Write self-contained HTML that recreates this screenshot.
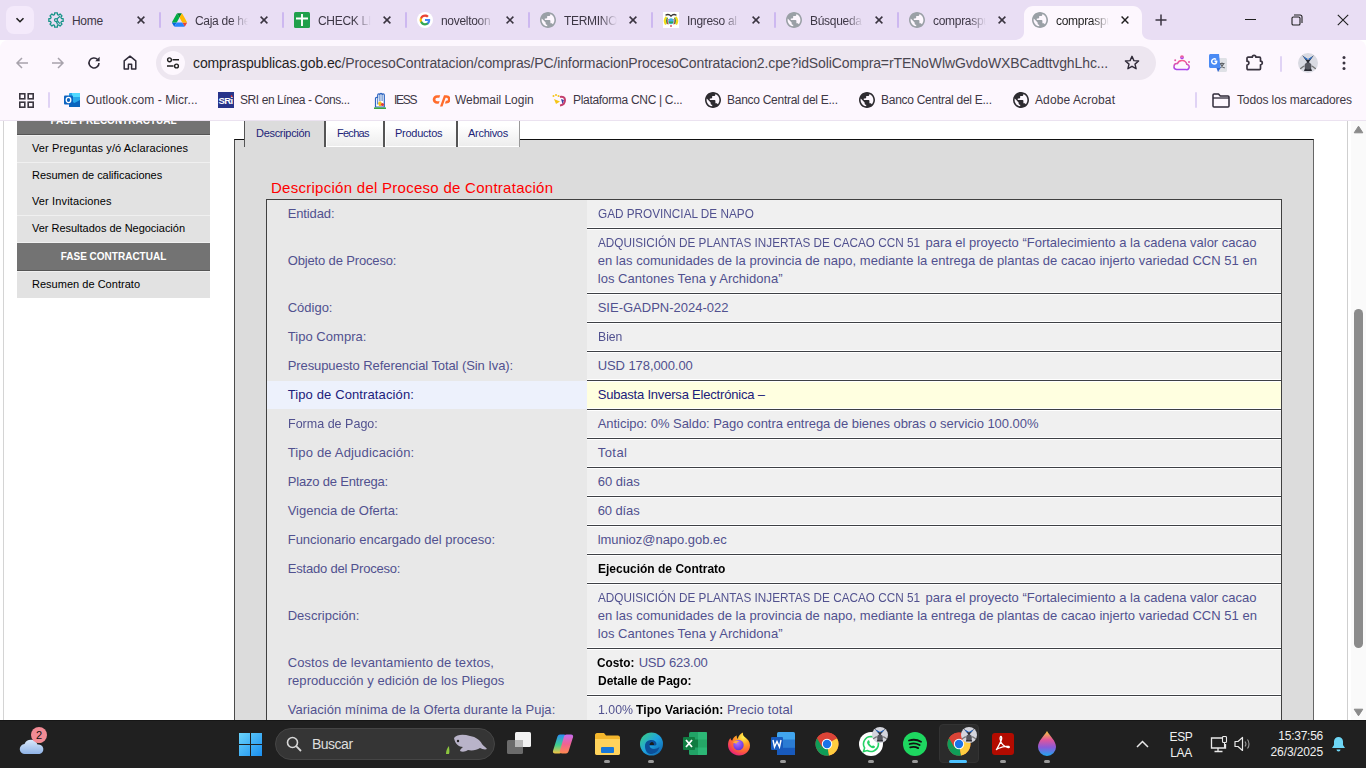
<!DOCTYPE html>
<html><head><meta charset="utf-8">
<style>
*{margin:0;padding:0;box-sizing:border-box}
html,body{width:1366px;height:768px;overflow:hidden;background:#fff;font-family:"Liberation Sans",sans-serif}
.abs{position:absolute}
#tabstrip{position:absolute;left:0;top:0;width:1366px;height:40px;background:#e9def4}
#toolbar{position:absolute;left:0;top:40px;width:1366px;height:80px;background:#fdf7fe;border-radius:8px 8px 0 0}
#page{position:absolute;left:0;top:120px;width:1366px;height:600px;background:#fff;overflow:hidden}
#taskbar{position:absolute;left:0;top:720px;width:1366px;height:48px;background:#202020}
.tt{position:absolute;top:14px;font-size:12px;line-height:14px;color:#3d3745;white-space:nowrap;overflow:hidden;letter-spacing:-0.3px;-webkit-mask-image:linear-gradient(90deg,#000 68%,transparent 100%)}
.sep{position:absolute;top:12px;width:2px;height:16px;background:#cdb8f0;border-radius:1px}
.bm{position:absolute;font-size:12px;line-height:14px;color:#3d3745;white-space:nowrap}
.sbh,.sbd,.sbl,.sbi{left:17px;width:193px}
.sbh{background:#737373;color:#fff;font-weight:bold;font-size:10px;text-align:center}
.sbh span{position:absolute;left:0;right:0;top:7px;line-height:14px}
.sbd{height:1px;background:#555}
.sbl{height:1px;background:#f0f0f0}
.sbi{background:#e2e2e2;font-size:11px;color:#000}
.sbi span{position:absolute;left:15px;top:5px;line-height:14px;white-space:nowrap}
.tabi{top:-6px;height:33px;border-left:2px solid #555;background:linear-gradient(#fff 35%,#ececec);box-shadow:inset 1px -1px 0 #fff}
.tabt{top:6px;font-size:11px;line-height:14px;color:#221f78;white-space:nowrap}
.rs{left:587px;width:694px;height:3px;background:#3e4045;border-top:1px solid #fff;border-bottom:1px solid #fff}
.cv,.cl{font-size:13px;line-height:18px;color:#51518f;white-space:nowrap}
.cv{left:598px}.cl{left:288px}
.cv b{color:#000}
.hl{color:#20207a}
.dot{top:40px;width:6px;height:3px;border-radius:2px;background:#9a9a9a}
.av{width:16px;height:16px;border-radius:8px;background:radial-gradient(circle at 50% 60%,#4a4a50 0,#3a3a40 30%,#9a9ca6 55%,#e6e6ec 85%)}

</style></head>
<body>
<div id="tabstrip">
 <div class="abs" style="left:6px;top:6px;width:28px;height:28px;border-radius:8px;background:#f4eafb"></div>
 <svg class="abs" style="left:14px;top:14px" width="12" height="12" viewBox="0 0 12 12"><path d="M2.5 4.2 6 7.7 9.5 4.2" fill="none" stroke="#1f1f1f" stroke-width="1.6"/></svg>
 <!-- tab 1 Home -->
 <svg class="abs" style="left:48px;top:12px" width="16" height="16" viewBox="0 0 16 16"><g fill="none" stroke="#179488" stroke-width="1.25" stroke-linejoin="round"><path d="M6.55 2.59 L6.61 0.83 L9.39 0.83 L9.45 2.59 L10.80 3.15 L12.08 1.95 L14.05 3.92 L12.85 5.20 L13.41 6.55 L15.17 6.61 L15.17 9.39 L13.41 9.45 L12.85 10.80 L14.05 12.08 L12.08 14.05 L10.80 12.85 L9.45 13.41 L9.39 15.17 L6.61 15.17 L6.55 13.41 L5.20 12.85 L3.92 14.05 L1.95 12.08 L3.15 10.80 L2.59 9.45 L0.83 9.39 L0.83 6.61 L2.59 6.55 L3.15 5.20 L1.95 3.92 L3.92 1.95 L5.20 3.15Z"/><circle cx="8" cy="8" r="1.5"/><path d="M9.1 6.9 12 4.2M8.4 9.5 9.6 12.6M9.5 9 11.8 11.6"/></g></svg>
 <div class="tt" style="left:72px;width:52px;-webkit-mask-image:none">Home</div>
 <svg class="abs xx" style="left:137px;top:16px" width="8" height="8" viewBox="0 0 8 8"><path d="M.6.6l6.8 6.8M7.4.6.6 7.4" stroke="#3a3440" stroke-width="1.5"/></svg>
 <div class="sep" style="left:159px"></div>
 <!-- tab 2 Drive -->
 <svg class="abs" style="left:172px;top:13px" width="15" height="14" viewBox="0 0 87.3 78"><path d="m6.6 66.85 3.85 6.65c.8 1.4 1.95 2.5 3.3 3.3l13.75-23.8h-27.5c0 1.55.4 3.1 1.2 4.5z" fill="#0066da"/><path d="m43.65 25-13.75-23.8c-1.35.8-2.5 1.9-3.3 3.3l-25.4 44a9.06 9.06 0 0 0 -1.2 4.5h27.5z" fill="#00ac47"/><path d="m73.55 76.8c1.35-.8 2.5-1.9 3.3-3.3l1.6-2.75 7.650-13.25c.8-1.4 1.2-2.95 1.2-4.5h-27.502l5.852 11.5z" fill="#ea4335"/><path d="m43.65 25 13.75-23.8c-1.35-.8-2.9-1.2-4.5-1.2h-18.5c-1.6 0-3.150.45-4.5 1.2z" fill="#00832d"/><path d="m59.8 53h-32.3l-13.75 23.8c1.35.8 2.9 1.2 4.5 1.2h50.8c1.6 0 3.15-.45 4.5-1.2z" fill="#2684fc"/><path d="m73.4 26.5-12.7-22c-.8-1.4-1.95-2.5-3.3-3.3l-13.75 23.8 16.15 28h27.45c0-1.55-.4-3.1-1.2-4.5z" fill="#ffba00"/></svg>
 <div class="tt" style="left:195px;width:53px">Caja de herramientas</div>
 <svg class="abs" style="left:260px;top:16px" width="8" height="8" viewBox="0 0 8 8"><path d="M.6.6l6.8 6.8M7.4.6.6 7.4" stroke="#3a3440" stroke-width="1.5"/></svg>
 <div class="sep" style="left:282px"></div>
 <!-- tab 3 sheet -->
 <svg class="abs" style="left:294px;top:12px" width="16" height="16" viewBox="0 0 16 16"><rect width="16" height="16" rx="1.5" fill="#20a04b"/><path d="M2 6.5h12M8 2v12" stroke="#fff" stroke-width="1.9"/></svg>
 <div class="tt" style="left:318px;width:53px">CHECK LIST</div>
 <svg class="abs" style="left:383px;top:16px" width="8" height="8" viewBox="0 0 8 8"><path d="M.6.6l6.8 6.8M7.4.6.6 7.4" stroke="#3a3440" stroke-width="1.5"/></svg>
 <div class="sep" style="left:405px"></div>
 <!-- tab 4 google -->
 <svg class="abs" style="left:417px;top:12px" width="16" height="16" viewBox="0 0 16 16"><circle cx="8" cy="8" r="8" fill="#fff"/><path d="M13.2 8.1c0-.4 0-.8-.1-1.2H8v2.2h2.9c-.1.7-.5 1.3-1.1 1.7v1.4h1.8c1-.9 1.6-2.3 1.6-4.1z" fill="#4285f4"/><path d="M8 13.4c1.5 0 2.7-.5 3.6-1.3l-1.8-1.4c-.5.3-1.1.5-1.8.5-1.4 0-2.6-1-3-2.2H3.2v1.4c.9 1.8 2.7 3 4.8 3z" fill="#34a853"/><path d="M5 9c-.1-.3-.2-.7-.2-1s.1-.7.2-1V5.6H3.2C2.8 6.3 2.6 7.1 2.6 8s.2 1.7.6 2.4z" fill="#fbbc05"/><path d="M8 4.8c.8 0 1.5.3 2.1.8l1.6-1.6C10.7 3.1 9.5 2.6 8 2.6c-2.1 0-3.9 1.2-4.8 3L5 7c.4-1.3 1.6-2.2 3-2.2z" fill="#ea4335"/></svg>
 <div class="tt" style="left:441px;width:53px">noveltoon</div>
 <svg class="abs" style="left:506px;top:16px" width="8" height="8" viewBox="0 0 8 8"><path d="M.6.6l6.8 6.8M7.4.6.6 7.4" stroke="#3a3440" stroke-width="1.5"/></svg>
 <div class="sep" style="left:528px"></div>
 <!-- tab 5 globe -->
 <svg class="abs" style="left:540px;top:12px" width="16" height="16" viewBox="0 0 16 16"><use href="#globeg"/></svg>
 <div class="tt" style="left:564px;width:53px">TERMINOS</div>
 <svg class="abs" style="left:629px;top:16px" width="8" height="8" viewBox="0 0 8 8"><path d="M.6.6l6.8 6.8M7.4.6.6 7.4" stroke="#3a3440" stroke-width="1.5"/></svg>
 <div class="sep" style="left:651px"></div>
 <!-- tab 6 ecuador -->
 <svg class="abs" style="left:663px;top:12px" width="16" height="16" viewBox="0 0 16 16"><rect width="16" height="16" fill="#fff"/><path d="M3 12.5C1.5 10 1.5 7 3.5 5M13 12.5c1.5-2.5 1.5-5.5-.5-7.5" fill="none" stroke="#f5dc1a" stroke-width="2.2"/><path d="M4.5 12C3.4 10 3.4 7.5 4.6 5.8M11.5 12c1.1-2 1.1-4.5-.1-6.2" fill="none" stroke="#2c8a3a" stroke-width="1.1"/><path d="M5.2 12.3C4.5 10.5 4.5 8.5 5.2 7M10.8 12.3c.7-1.8.7-3.8 0-5.3" fill="none" stroke="#c8283a" stroke-width="1"/><ellipse cx="8" cy="9.3" rx="2.6" ry="3" fill="#3fb2e6"/><path d="M5.6 9.6h4.8l-.5 1.6H6.1z" fill="#2fa650"/><path d="M2.5 3.2C5 1.8 6.8 2.6 8 4.2 9.2 2.6 11 1.8 13.5 3.2" fill="none" stroke="#3a3433" stroke-width="1.3"/><path d="M8 13.2v1.6" stroke="#d03040" stroke-width="1.6"/></svg>
 <div class="tt" style="left:687px;width:53px">Ingreso al sistema</div>
 <svg class="abs" style="left:752px;top:16px" width="8" height="8" viewBox="0 0 8 8"><path d="M.6.6l6.8 6.8M7.4.6.6 7.4" stroke="#3a3440" stroke-width="1.5"/></svg>
 <div class="sep" style="left:774px"></div>
 <!-- tab 7 -->
 <svg class="abs" style="left:786px;top:12px" width="16" height="16" viewBox="0 0 16 16"><use href="#globeg"/></svg>
 <div class="tt" style="left:810px;width:53px">Búsqueda de Procesos</div>
 <svg class="abs" style="left:875px;top:16px" width="8" height="8" viewBox="0 0 8 8"><path d="M.6.6l6.8 6.8M7.4.6.6 7.4" stroke="#3a3440" stroke-width="1.5"/></svg>
 <div class="sep" style="left:897px"></div>
 <!-- tab 8 -->
 <svg class="abs" style="left:909px;top:12px" width="16" height="16" viewBox="0 0 16 16"><use href="#globeg"/></svg>
 <div class="tt" style="left:933px;width:53px">compraspublicas</div>
 <svg class="abs" style="left:998px;top:16px" width="8" height="8" viewBox="0 0 8 8"><path d="M.6.6l6.8 6.8M7.4.6.6 7.4" stroke="#3a3440" stroke-width="1.5"/></svg>
 <!-- active tab -->
 <svg class="abs" style="left:1014px;top:6px" width="138" height="34" viewBox="0 0 138 34"><path d="M0 34c6 0 10-3 10-8V9c0-5 4-9 9-9h100c5 0 9 4 9 9v17c0 5 4 8 10 8z" fill="#fdf7fe"/></svg>
 <svg class="abs" style="left:1032px;top:12px" width="16" height="16" viewBox="0 0 16 16"><use href="#globeg"/></svg>
 <div class="tt" style="left:1056px;width:53px;color:#1f1f1f">compraspublicas</div>
 <svg class="abs" style="left:1121px;top:16px" width="8" height="8" viewBox="0 0 8 8"><path d="M.6.6l6.8 6.8M7.4.6.6 7.4" stroke="#1f1f1f" stroke-width="1.4"/></svg>
 <!-- new tab -->
 <svg class="abs" style="left:1155px;top:14px" width="12" height="12" viewBox="0 0 12 12"><path d="M6 .5v11M.5 6h11" stroke="#3a3440" stroke-width="1.5"/></svg>
 <!-- window controls -->
 <div class="abs" style="left:1245px;top:19px;width:11px;height:1px;background:#1f1f1f"></div>
 <svg class="abs" style="left:1291px;top:14px" width="12" height="12" viewBox="0 0 12 12"><rect x="1" y="3" width="8" height="8" rx="1.3" fill="none" stroke="#1f1f1f" stroke-width="1.1"/><path d="M3 1h6.2A1.8 1.8 0 0 1 11 2.8V9" fill="none" stroke="#1f1f1f" stroke-width="1.1"/></svg>
 <svg class="abs" style="left:1337px;top:14px" width="12" height="12" viewBox="0 0 12 12"><path d="M.8.8l10.4 10.4M11.2.8.8 11.2" stroke="#1f1f1f" stroke-width="1.1"/></svg>
</div>

<svg width="0" height="0" style="position:absolute"><defs>
 <g id="globeg" transform="translate(-1.6 -1.6) scale(.8)"><circle cx="12" cy="12" r="9" fill="#fdf7fe"/><path d="M12 2C6.48 2 2 6.48 2 12s4.48 10 10 10 10-4.48 10-10S17.52 2 12 2zm-1 17.93c-3.950-.49-7-3.85-7-7.93 0-.62.08-1.21.21-1.79L9 15v1c0 1.1.9 2 2 2v1.93zm6.9-2.54c-.26-.81-1-1.39-1.9-1.39h-1v-3c0-.55-.45-1-1-1H8v-2h2c.55 0 1-.45 1-1V7h2c1.1 0 2-.9 2-2v-.41c2.93 1.19 5 4.06 5 7.41 0 2.08-.8 3.97-2.1 5.39z" fill="#9aa0a6"/></g>
 <g id="globed" transform="translate(-1.6 -1.6) scale(.8)"><circle cx="12" cy="12" r="9" fill="#fdf7fe"/><path d="M12 2C6.48 2 2 6.48 2 12s4.48 10 10 10 10-4.48 10-10S17.52 2 12 2zm-1 17.93c-3.950-.49-7-3.85-7-7.93 0-.62.08-1.21.21-1.79L9 15v1c0 1.1.9 2 2 2v1.93zm6.9-2.54c-.26-.81-1-1.39-1.9-1.39h-1v-3c0-.55-.45-1-1-1H8v-2h2c.55 0 1-.45 1-1V7h2c1.1 0 2-.9 2-2v-.41c2.93 1.19 5 4.06 5 7.41 0 2.08-.8 3.97-2.1 5.39z" fill="#2d2b30"/></g>
</defs></svg>
<div id="toolbar">
 <!-- back -->
 <svg class="abs" style="left:15px;top:16px" width="14" height="14" viewBox="0 0 14 14"><path d="M13 7H2M7 2 2 7l5 5" fill="none" stroke="#a8a3ac" stroke-width="1.5"/></svg>
 <svg class="abs" style="left:51px;top:16px" width="14" height="14" viewBox="0 0 14 14"><path d="M1 7h11M7 2l5 5-5 5" fill="none" stroke="#a8a3ac" stroke-width="1.5"/></svg>
 <svg class="abs" style="left:87px;top:16px" width="14" height="14" viewBox="0 0 14 14"><path d="M12 7A5 5 0 1 1 10.6 3.5" fill="none" stroke="#2f2a38" stroke-width="1.6"/><path d="M12.6 .8v4.4H8.2z" fill="#2f2a38"/></svg>
 <svg class="abs" style="left:123px;top:15px" width="14" height="15" viewBox="0 0 14 15"><path d="M1.2 14V5.8L7 1.2l5.8 4.6V14H8.6V9.2H5.4V14z" fill="none" stroke="#2f2a38" stroke-width="1.5" stroke-linejoin="round"/></svg>
 <!-- omnibox -->
 <div class="abs" style="left:156px;top:6px;width:1000px;height:34px;border-radius:17px;background:#ede6f0"></div>
 <div class="abs" style="left:161px;top:11px;width:24px;height:24px;border-radius:12px;background:#fdf7fe"></div>
 <svg class="abs" style="left:166px;top:16px" width="14" height="14" viewBox="0 0 14 14"><g fill="none" stroke="#1f1f1f" stroke-width="1.4"><circle cx="3.5" cy="3.8" r="1.9"/><path d="M6.5 3.8H13M1 10h6.5"/><circle cx="10.5" cy="10" r="1.9"/></g></svg>
 <div class="abs" style="left:193px;top:15px;font-size:14px;letter-spacing:-0.115px;white-space:nowrap;color:#4a4650"><span style="color:#1f1f1f">compraspublicas.gob.ec</span>/ProcesoContratacion/compras/PC/informacionProcesoContratacion2.cpe?idSoliCompra=rTENoWlwGvdoWXBCadttvghLhc...</div>
 <svg class="abs" style="left:1124px;top:15px" width="16" height="16" viewBox="0 0 16 16"><path d="M8 1.3l1.9 4.3 4.7.4-3.6 3.1 1.1 4.6L8 11.3l-4.1 2.4 1.1-4.6L1.4 6l4.7-.4z" fill="none" stroke="#2f2a38" stroke-width="1.4" stroke-linejoin="round"/></svg>
 <!-- right icons -->
 <svg class="abs" style="left:1172px;top:13px" width="19" height="19" viewBox="0 0 19 19"><defs><linearGradient id="wg" x1="0" y1="0" x2="0" y2="1"><stop offset="0" stop-color="#f65a8e"/><stop offset="1" stop-color="#a644ee"/></linearGradient></defs><g fill="none" stroke="url(#wg)" stroke-width="1.5"><path d="M4.6 16.6h9.6a2.7 2.7 0 0 0 .6-5.4 5 5 0 0 0-9.4-.6 2.9 2.9 0 0 0-.8 6z"/><circle cx="10" cy="4.3" r="1.2"/></g><circle cx="3.2" cy="7.3" r="1" fill="#e45aa8"/><circle cx="17" cy="9" r="1" fill="#e45aa8"/></svg>
 <svg class="abs" style="left:1209px;top:14px" width="18" height="18" viewBox="0 0 18 18"><path d="M8 4h8.5c.8 0 1.5.7 1.5 1.5v11c0 .8-.7 1.5-1.5 1.5H9z" fill="#dfe1e6"/><path d="M10.5 9.5h5M13 8.5v1M11.3 9.5c.6 2 2.2 3.6 4.4 4.6M14.7 9.5c-.6 2-2.2 3.6-4.4 4.6" stroke="#5f6368" stroke-width="1.1" fill="none"/><path d="M0 1.5C0 .7.7 0 1.5 0H10l1.5 14H1.5C.7 14 0 13.3 0 12.5z" fill="#4a8af4"/><path d="M8.3 6.5H5.5v1.5h1.3c-.2.7-.8 1.2-1.6 1.2a1.8 1.8 0 0 1 0-3.6c.5 0 .9.2 1.2.5l1.1-1.1A3.3 3.3 0 1 0 5.2 10.7c1.9 0 3.2-1.3 3.2-3.3 0-.3 0-.6-.1-.9z" fill="#fff"/><path d="M9 18l-1.5-4h4z" fill="#3168d1"/></svg>
 <svg class="abs" style="left:1245px;top:12px" width="20" height="20" viewBox="0 0 20 20"><path d="M3 5.2h4.3a1.8 1.8 0 0 1 3.6 0h3.6a1 1 0 0 1 1 1v3a1.8 1.8 0 0 1 0 3.6v3.8a1 1 0 0 1-1 1H3a1 1 0 0 1-1-1v-3.6a1.8 1.8 0 0 0 0-3.8V6.2a1 1 0 0 1 1-1z" fill="none" stroke="#3a3440" stroke-width="1.7" stroke-linejoin="round"/></svg>
 <div class="abs" style="left:1280px;top:16px;width:2px;height:16px;background:#e0d3f5;border-radius:1px"></div>
 <svg class="abs" style="left:1298px;top:13px" width="20" height="20" viewBox="0 0 20 20"><defs><clipPath id="avc"><circle cx="10" cy="10" r="10"/></clipPath></defs><g clip-path="url(#avc)"><rect width="20" height="20" fill="#d9dae2"/><path d="M4 2l5 7-3 9h8l-3-9 5-7-6 5z" fill="#2a2b33"/><path d="M5 3l3 4 2-1M15 3l-3 4-2-1" fill="#2d6fc8"/><circle cx="10" cy="13" r="3.5" fill="#55565e"/><path d="M2 16l4-3M18 16l-4-3" stroke="#777" stroke-width="1.5"/></g></svg>
 <svg class="abs" style="left:1337px;top:15px" width="14" height="16" viewBox="0 0 14 16"><circle cx="7" cy="2.5" r="1.5" fill="#3a3440"/><circle cx="7" cy="8" r="1.5" fill="#3a3440"/><circle cx="7" cy="13.5" r="1.5" fill="#3a3440"/></svg>
 <!-- bookmarks -->
 <svg class="abs" style="left:19px;top:53px" width="15" height="15" viewBox="0 0 15 15"><g fill="none" stroke="#3b3640" stroke-width="1.6"><rect x=".8" y=".8" width="5" height="5"/><rect x="9.2" y=".8" width="5" height="5"/><rect x=".8" y="9.2" width="5" height="5"/><rect x="9.2" y="9.2" width="5" height="5"/></g></svg>
 <div class="abs" style="left:48px;top:52px;width:2px;height:16px;background:#e0d3f5;border-radius:1px"></div>
 <svg class="abs" style="left:64px;top:52px" width="16" height="16" viewBox="0 0 16 16"><rect x="5" y="1" width="11" height="14" rx="1" fill="#28a8ea"/><path d="M5 8l5.5 3L16 8v7H5z" fill="#0a64bd"/><path d="M8 1h8v4H8z" fill="#50d9ff"/><rect x="0" y="3.5" width="9" height="9" rx="1" fill="#0b63c1"/><ellipse cx="4.5" cy="8" rx="2.3" ry="2.6" fill="none" stroke="#fff" stroke-width="1.3"/></svg>
 <div class="bm" style="left:86px;top:53px;letter-spacing:0.083px">Outlook.com - Micr...</div>
 <svg class="abs" style="left:218px;top:52px" width="16" height="16" viewBox="0 0 16 16"><rect width="16" height="16" fill="#27348b"/><text x=".6" y="11.8" font-family="Liberation Sans" font-weight="bold" font-size="9.5" letter-spacing="-.6" fill="#fff">SRi</text><circle cx="13.6" cy="4.2" r=".9" fill="#e53935"/></svg>
 <div class="bm" style="left:240px;top:53px;letter-spacing:-0.416px">SRI en Línea - Cons...</div>
 <svg class="abs" style="left:372px;top:52px" width="16" height="17" viewBox="0 0 16 17"><path d="M3.5 15V6.5a1.1 1.1 0 0 1 2.2 0V3a1.1 1.1 0 0 1 2.2 0v-.5a1.1 1.1 0 0 1 2.2 0V3a1.1 1.1 0 0 1 2.2 0v12z" fill="#fff" stroke="#2d64c0" stroke-width="1.2"/><path d="M5.7 6.5v6M7.9 3v6M10.1 2.5v6.5" stroke="#2d64c0" stroke-width=".9"/><path d="M6 11l2-2 2 2-1 3H7z" fill="#f2c01e"/><circle cx="10.5" cy="12.5" r="1.6" fill="#e23b3b"/><path d="M2 16.2h12" stroke="#3aa845" stroke-width="1.6"/></svg>
 <div class="bm" style="left:394px;top:53px;letter-spacing:-1.3px">IESS</div>
 <svg class="abs" style="left:432px;top:53px" width="18" height="14" viewBox="0 0 18 14"><path d="M8.2 2.2H5a4.3 4.3 0 0 0 0 8.6h1.6l1.1-2.6H5.1a1.7 1.7 0 0 1 0-3.4h2.2zM8 13.5 12 2.2h2.4a4.100 4.100 0 0 1 0 8.2h-1.500l1-2.600h.6a1.500 1.500 0 0 0 0-3h-.9L10.500 13.500z" fill="#ff6c2c"/></svg>
 <div class="bm" style="left:455px;top:53px;letter-spacing:-0.038px">Webmail Login</div>
 <svg class="abs" style="left:551px;top:52px" width="16" height="16" viewBox="0 0 16 16"><path d="M9 5c2.5-1 5 .5 5 3 0 2.6-2 5-5 5.5" fill="none" stroke="#c43e6c" stroke-width="2"/><path d="M3 7l6 2.5L5 12z" fill="#f5c518"/><path d="M10 7l3 1-1.5 4z" fill="#3b3fa0"/><circle cx="2.5" cy="4" r="1" fill="#f5c518"/><circle cx="5" cy="3" r="1" fill="#f5c518"/><circle cx="7.5" cy="4" r="1" fill="#f5c518"/></svg>
 <div class="bm" style="left:573px;top:53px;letter-spacing:-0.311px">Plataforma CNC | C...</div>
 <svg class="abs" style="left:705px;top:52px" width="16" height="16" viewBox="0 0 16 16"><use href="#globed"/></svg>
 <div class="bm" style="left:727px;top:53px;letter-spacing:-0.273px">Banco Central del E...</div>
 <svg class="abs" style="left:859px;top:52px" width="16" height="16" viewBox="0 0 16 16"><use href="#globed"/></svg>
 <div class="bm" style="left:881px;top:53px;letter-spacing:-0.273px">Banco Central del E...</div>
 <svg class="abs" style="left:1013px;top:52px" width="16" height="16" viewBox="0 0 16 16"><use href="#globed"/></svg>
 <div class="bm" style="left:1035px;top:53px;letter-spacing:0.105px">Adobe Acrobat</div>
 <div class="abs" style="left:1195px;top:52px;width:2px;height:16px;background:#e0d3f5;border-radius:1px"></div>
 <svg class="abs" style="left:1212px;top:53px" width="18" height="15" viewBox="0 0 18 15"><path d="M1 2c0-.6.4-1 1-1h4.5l1.8 2H16c.6 0 1 .4 1 1v9c0 .6-.4 1-1 1H2c-.6 0-1-.4-1-1z" fill="none" stroke="#2f2a38" stroke-width="1.5" stroke-linejoin="round"/><path d="M1 5h16" stroke="#2f2a38" stroke-width="1.3"/></svg>
 <div class="bm" style="left:1237px;top:53px;letter-spacing:-0.126px">Todos los marcadores</div>
</div>

<div id="page">
 <div class="abs" style="left:3px;top:0;width:1px;height:600px;background:#d4d4d4"></div>
 <div class="abs" style="left:1347px;top:0;width:1px;height:600px;background:#cfcfcf"></div>
 <!-- sidebar (page coords: y-120) -->
 <div class="abs sbh" style="top:-13px;height:27px"><span>FASE PRECONTRACTUAL</span></div>
 <div class="abs sbd" style="top:14px"></div><div class="abs sbl" style="top:15px"></div>
 <div class="abs sbi" style="top:16px;height:26px"><span style="letter-spacing:0.108px">Ver Preguntas y/ó Aclaraciones</span></div>
 <div class="abs sbl" style="top:42px"></div>
 <div class="abs sbi" style="top:43px;height:52px"><span style="letter-spacing:-0.027px">Resumen de calificaciones</span><span style="top:31px;letter-spacing:0.13px">Ver Invitaciones</span></div>
 <div class="abs sbl" style="top:95px"></div>
 <div class="abs sbi" style="top:96px;height:26px"><span style="letter-spacing:-0.017px">Ver Resultados de Negociación</span></div>
 <div class="abs sbl" style="top:122px"></div>
 <div class="abs sbh" style="top:123px;height:27px"><span>FASE CONTRACTUAL</span></div>
 <div class="abs sbd" style="top:150px"></div><div class="abs sbl" style="top:151px"></div>
 <div class="abs sbi" style="top:152px;height:26px"><span style="letter-spacing:0.021px">Resumen de Contrato</span></div>

 <!-- main box -->
 <div class="abs" style="left:234px;top:19px;width:1080px;height:700px;background:#dcdcdc;border-left:1px solid #4a4a4a;border-top:1px solid #111;border-right:1px solid #666"></div>
 <!-- tabs -->
 <div class="abs" style="left:244px;top:-6px;width:81px;height:33px;background:#dcdcdc;border-left:1px solid #555"></div>
 <div class="abs tabi" style="left:324px;width:60px"></div>
 <div class="abs tabi" style="left:383px;width:74px"></div>
 <div class="abs tabi" style="left:456px;width:64px;border-right:1px solid #999"></div>
 <div class="abs tabt" style="left:256px;letter-spacing:-0.307px">Descripción</div>
 <div class="abs tabt" style="left:337px;letter-spacing:-0.736px">Fechas</div>
 <div class="abs tabt" style="left:395px;letter-spacing:-0.254px">Productos</div>
 <div class="abs tabt" style="left:468px;letter-spacing:-0.284px">Archivos</div>

 <div class="abs" style="left:271px;top:59px;font-size:15px;color:#ff0000;letter-spacing:0.27px;white-space:nowrap">Descripción del Proceso de Contratación</div>

 <!-- table -->
 <div class="abs" style="left:266px;top:79px;width:1016px;height:600px;background:#e8e8e8;border-left:1px solid #404040;border-top:1px solid #404040;border-right:1px solid #404040"></div>
 <div class="abs" style="left:587px;top:80px;width:694px;height:600px;background:#f0f0f0"></div>
 <div class="abs" style="left:267px;top:261px;width:320px;height:28px;background:#edf1fc"></div>
 <div class="abs" style="left:587px;top:261px;width:694px;height:28px;background:#ffffe0"></div>
  <div class="abs rs" style="top:107px"></div>
 <div class="abs rs" style="top:172px"></div>
 <div class="abs rs" style="top:201px"></div>
 <div class="abs rs" style="top:230px"></div>
 <div class="abs rs" style="top:259px"></div>
 <div class="abs rs" style="top:288px"></div>
 <div class="abs rs" style="top:317px"></div>
 <div class="abs rs" style="top:346px"></div>
 <div class="abs rs" style="top:375px"></div>
 <div class="abs rs" style="top:404px"></div>
 <div class="abs rs" style="top:433px"></div>
 <div class="abs rs" style="top:462px"></div>
 <div class="abs rs" style="top:527px"></div>
 <div class="abs rs" style="top:574px"></div>

  <div class="abs cv " style="left:597.7px;top:85px;transform:scaleX(0.9049);transform-origin:0 0">GAD PROVINCIAL DE NAPO</div>
 <div class="abs cl " style="left:287.7px;top:85px;letter-spacing:-0.129px">Entidad:</div>
 <div class="abs cv " style="left:597.7px;top:114px;transform:scaleX(0.9044);transform-origin:0 0">ADQUISICIÓN DE PLANTAS INJERTAS DE CACAO CCN 51</div>
 <div class="abs cv " style="left:925.6px;top:114px;letter-spacing:-0.001px">para el proyecto “Fortalecimiento a la cadena valor cacao</div>
 <div class="abs cv " style="left:597.7px;top:132px;letter-spacing:0.028px">en las comunidades de la provincia de napo, mediante la entrega de plantas de cacao injerto variedad CCN 51 en</div>
 <div class="abs cv " style="left:597.7px;top:150px;letter-spacing:0.051px">los Cantones Tena y Archidona”</div>
 <div class="abs cl " style="left:287.7px;top:132px;letter-spacing:-0.147px">Objeto de Proceso:</div>
 <div class="abs cv " style="left:597.7px;top:179px;letter-spacing:0.001px">SIE-GADPN-2024-022</div>
 <div class="abs cl " style="left:287.7px;top:179px;letter-spacing:-0.002px">Código:</div>
 <div class="abs cv " style="left:597.7px;top:208px;transform:scaleX(0.9373);transform-origin:0 0">Bien</div>
 <div class="abs cl " style="left:287.7px;top:208px;letter-spacing:0.047px">Tipo Compra:</div>
 <div class="abs cv " style="left:597.7px;top:237px;letter-spacing:-0.079px">USD 178,000.00</div>
 <div class="abs cl " style="left:287.7px;top:237px;letter-spacing:-0.085px">Presupuesto Referencial Total (Sin Iva):</div>
 <div class="abs cv hl" style="left:597.7px;top:266px;letter-spacing:-0.197px">Subasta Inversa Electrónica –</div>
 <div class="abs cl hl" style="left:287.7px;top:266px;letter-spacing:0.119px">Tipo de Contratación:</div>
 <div class="abs cv " style="left:597.7px;top:295px;letter-spacing:-0.040px">Anticipo: 0% Saldo: Pago contra entrega de bienes obras o servicio 100.00%</div>
 <div class="abs cl " style="left:287.7px;top:295px;transform:scaleX(0.9633);transform-origin:0 0">Forma de Pago:</div>
 <div class="abs cv " style="left:597.7px;top:324px;letter-spacing:0.458px">Total</div>
 <div class="abs cl " style="left:287.7px;top:324px;letter-spacing:0.170px">Tipo de Adjudicación:</div>
 <div class="abs cv " style="left:597.7px;top:353px;letter-spacing:0.013px">60 dias</div>
 <div class="abs cl " style="left:287.7px;top:353px;letter-spacing:-0.179px">Plazo de Entrega:</div>
 <div class="abs cv " style="left:597.7px;top:382px;letter-spacing:-0.109px">60 días</div>
 <div class="abs cl " style="left:287.7px;top:382px;letter-spacing:-0.015px">Vigencia de Oferta:</div>
 <div class="abs cv " style="left:597.7px;top:411px;letter-spacing:-0.031px">lmunioz@napo.gob.ec</div>
 <div class="abs cl " style="left:287.7px;top:411px;letter-spacing:-0.001px">Funcionario encargado del proceso:</div>
 <div class="abs cv " style="left:597.7px;top:440px;transform:scaleX(0.9234);transform-origin:0 0"><b>Ejecución de Contrato</b></div>
 <div class="abs cl " style="left:287.7px;top:440px;letter-spacing:-0.198px">Estado del Proceso:</div>
 <div class="abs cv " style="left:597.7px;top:469px;transform:scaleX(0.9044);transform-origin:0 0">ADQUISICIÓN DE PLANTAS INJERTAS DE CACAO CCN 51</div>
 <div class="abs cv " style="left:925.6px;top:469px;letter-spacing:-0.001px">para el proyecto “Fortalecimiento a la cadena valor cacao</div>
 <div class="abs cv " style="left:597.7px;top:487px;letter-spacing:0.028px">en las comunidades de la provincia de napo, mediante la entrega de plantas de cacao injerto variedad CCN 51 en</div>
 <div class="abs cv " style="left:597.7px;top:505px;letter-spacing:0.051px">los Cantones Tena y Archidona”</div>
 <div class="abs cl " style="left:287.7px;top:487px;letter-spacing:0.024px">Descripción:</div>
 <div class="abs cv " style="left:597.4px;top:534px;transform:scaleX(0.9084);transform-origin:0 0"><b>Costo:</b></div>
 <div class="abs cv " style="left:638.7px;top:534px;letter-spacing:-0.203px">USD 623.00</div>
 <div class="abs cv " style="left:597.7px;top:552px;transform:scaleX(0.9245);transform-origin:0 0"><b>Detalle de Pago:</b></div>
 <div class="abs cl " style="left:287.7px;top:534px;letter-spacing:0.098px">Costos de levantamiento de textos,</div>
 <div class="abs cl " style="left:287.7px;top:552px;letter-spacing:0.057px">reproducción y edición de los Pliegos</div>
 <div class="abs cv " style="left:597.7px;top:581px;transform:scaleX(0.9492);transform-origin:0 0">1.00%</div>
 <div class="abs cv " style="left:636.1px;top:581px;transform:scaleX(0.9392);transform-origin:0 0"><b>Tipo Variación:</b></div>
 <div class="abs cv " style="left:726.9px;top:581px;letter-spacing:0.059px">Precio total</div>
 <div class="abs cl " style="left:287.7px;top:581px;letter-spacing:0.042px">Variación mínima de la Oferta durante la Puja:</div>

 <!-- scrollbar -->
 <div class="abs" style="left:1351px;top:0;width:15px;height:600px;background:#fafafa"></div>
 <svg class="abs" style="left:1353px;top:5px" width="11" height="9" viewBox="0 0 11 9"><path d="M5.5 1.2 9.8 7.8H1.2z" fill="#8a8a8a" stroke="#8a8a8a" stroke-width="1" stroke-linejoin="round"/></svg>
 <div class="abs" style="left:1354px;top:189px;width:9px;height:339px;border-radius:4.5px;background:#8b8b8b"></div>
 <svg class="abs" style="left:1353px;top:588px" width="11" height="9" viewBox="0 0 11 9"><path d="M5.5 7.8 9.8 1.2H1.2z" fill="#8a8a8a" stroke="#8a8a8a" stroke-width="1" stroke-linejoin="round"/></svg>
 <div class="abs" style="left:0;top:0;width:1366px;height:1px;background:#ebe2f0"></div>
</div>

<div id="taskbar">
 <div class="abs" style="left:0;top:0;width:1366px;height:1px;background:#161616"></div>
 <!-- weather -->
 <svg class="abs" style="left:19px;top:731px;top:11px" width="28" height="26" viewBox="0 0 28 26"><defs><linearGradient id="cl" x1="0" y1="0" x2="0" y2="1"><stop offset="0" stop-color="#d8e8fb"/><stop offset="1" stop-color="#8fb3e6"/></linearGradient></defs><circle cx="20" cy="8" r="4" fill="#f59b3a"/><path d="M6 23a5 5 0 0 1-.5-10 7 7 0 0 1 13 0.5A4.8 4.8 0 0 1 20.5 23z" fill="url(#cl)"/></svg>
 <div class="abs" style="left:31px;top:7px;width:16px;height:16px;border-radius:8px;background:#f28b95;color:#111;font-size:11px;text-align:center;line-height:16px">2</div>
 <!-- start -->
 <svg class="abs" style="left:239px;top:13px" width="23" height="23" viewBox="0 0 23 23"><defs><linearGradient id="wl" x1="0" y1="0" x2="1" y2="1"><stop offset="0" stop-color="#6ad4fb"/><stop offset="1" stop-color="#1a8ff0"/></linearGradient></defs><path d="M0 0h11v11H0zM12 0h11v11H12zM0 12h11v11H0zM12 12h11v11H12z" fill="url(#wl)"/></svg>
 <!-- search -->
 <div class="abs" style="left:275px;top:8px;width:220px;height:32px;border-radius:16px;background:#353535;border:1px solid #454545"></div>
 <svg class="abs" style="left:286px;top:16px" width="16" height="16" viewBox="0 0 16 16"><circle cx="6.5" cy="6.5" r="5" fill="none" stroke="#d8d8d8" stroke-width="1.6"/><path d="M10.2 10.2 15 15" stroke="#d8d8d8" stroke-width="1.8"/></svg>
 <div class="abs" style="left:312px;top:16px;font-size:14px;color:#dedede;letter-spacing:-0.5px">Buscar</div>
 <svg class="abs" style="left:444px;top:12px" width="44" height="24" viewBox="0 0 44 24"><path d="M10 6c3-4 10-4 16-2 6 1 10 4 12 8 1 2 4 3 5 5-2 1-5 0-7-1-3 2-8 3-12 2-3 2-6 2-8 1 0-2 2-3 3-4-4 0-8-3-9-9z" fill="#b9b3c9"/><circle cx="14" cy="9" r="1.2" fill="#222"/><path d="M2 22c0-3 1-6 3-8 0 3 1 5 0 8z" fill="#8cc63f"/></svg>
 <!-- apps -->
 <svg class="abs" style="left:507px;top:12px" width="25" height="23" viewBox="0 0 25 23"><rect x="0" y="8" width="16" height="14" rx="1.5" fill="#6b6b6b"/><rect x="8" y="0" width="16" height="15" rx="1.5" fill="#f2f2f2"/><rect x="8" y="8" width="8" height="7" fill="#b8b8b8"/></svg>
 <svg class="abs" style="left:551px;top:12px" width="24" height="24" viewBox="0 0 24 24"><defs><linearGradient id="cp1" x1="0" y1="0" x2="0" y2="1"><stop offset="0" stop-color="#2a8cf5"/><stop offset=".55" stop-color="#3ecf8e"/><stop offset="1" stop-color="#f7c443"/></linearGradient><linearGradient id="cp2" x1="0" y1="0" x2="0" y2="1"><stop offset="0" stop-color="#c56cf0"/><stop offset=".5" stop-color="#f06292"/><stop offset="1" stop-color="#ff8a50"/></linearGradient></defs><path d="M9 2.5h4c1.3 0 2 .8 2.3 2L11 19.5c-.4 1.3-1.3 2-2.6 2H4c-1.6 0-2.5-1.2-2-2.8L6.5 4.5C7 3.2 7.8 2.5 9 2.5z" fill="url(#cp1)"/><path d="M15.6 2.5H20c1.6 0 2.5 1.2 2 2.8L17.5 19.5c-.5 1.3-1.3 2-2.5 2h-4c-1.3 0-2-.8-2.3-2L13 4.5c.4-1.3 1.3-2 2.6-2z" fill="url(#cp2)"/></svg>
 <svg class="abs" style="left:595px;top:13px" width="25" height="22" viewBox="0 0 25 22"><path d="M0 2c0-1 .8-2 2-2h7l2 2.5h12c1 0 2 1 2 2V20c0 1-1 2-2 2H2c-1 0-2-1-2-2z" fill="#f3b62c"/><path d="M0 6h25v14c0 1-1 2-2 2H2c-1 0-2-1-2-2z" fill="#ffd35c"/><rect x="6" y="14" width="13" height="6" rx="1" fill="#1878d8"/></svg>
 <div class="abs dot" style="left:604px"></div>
 <svg class="abs" style="left:639px;top:12px" width="25" height="24" viewBox="0 0 25 24"><defs><linearGradient id="eg" x1="0" y1="0" x2="1" y2="1"><stop offset="0" stop-color="#3bd27a"/><stop offset=".5" stop-color="#1fa2e0"/><stop offset="1" stop-color="#0c59a4"/></linearGradient></defs><circle cx="12.5" cy="12" r="11.5" fill="url(#eg)"/><path d="M6 14c0-4 3-6 6.5-6 3 0 5 2 5 4 0 1-1 1.5-2 1.5h-5c.2 2 2 3.5 4.5 3.5 2 0 4-.8 5.5-2-1 4.5-5 7-9 7C8 22 6 18 6 14z" fill="#0b4f98"/><path d="M10.5 13c.3-2 1.5-3 2.5-3s2 1 2 3z" fill="#1c1c1c"/></svg>
 <div class="abs dot" style="left:648px"></div>
 <svg class="abs" style="left:683px;top:12px" width="24" height="23" viewBox="0 0 24 23"><rect x="6" y="0" width="18" height="23" rx="1.5" fill="#21a366"/><path d="M6 7.5h18v8H6z" fill="#107c41"/><path d="M15 0h9v23h-9z" fill="#33c481" opacity=".6"/><rect x="0" y="5" width="12" height="13" rx="1" fill="#107c41"/><path d="M3 8l6 7M9 8l-6 7" stroke="#fff" stroke-width="1.8"/></svg>
 <svg class="abs" style="left:727px;top:12px" width="24" height="24" viewBox="0 0 24 24"><defs><radialGradient id="ff" cx=".7" cy=".2" r=".9"><stop offset="0" stop-color="#fff44f"/><stop offset=".35" stop-color="#ffa326"/><stop offset=".7" stop-color="#ff5e3a"/><stop offset="1" stop-color="#e31587"/></radialGradient><radialGradient id="fp" cx=".4" cy=".3" r=".8"><stop offset="0" stop-color="#b072ff"/><stop offset="1" stop-color="#5b2bd6"/></radialGradient></defs><path d="M12 23.5C5.7 23.5 1 18.7 1 12.8c0-2.6.9-5 2.4-6.8.2 1.3.9 2.3 1.8 2.8C5.8 6.5 7.5 4.5 9.8 3.6c-.2 1.4.1 2.6.9 3.4C11.4 4 13.4 1.5 16 .5c-.3 2 .5 3.5 1.8 4.5 2.8 2 5.2 4.700 5.2 8.200 0 5.900-4.700 10.300-11 10.300z" fill="url(#ff)"/><circle cx="11.5" cy="13" r="5.2" fill="url(#fp)"/><path d="M6 10.5c1.8-1.800 4.5-2.200 6.800-1.200-1.500.300-2.800 1.100-3.400 2.400z" fill="#ffb03a"/></svg>
 <svg class="abs" style="left:771px;top:12px" width="24" height="23" viewBox="0 0 24 23"><rect x="6" y="0" width="18" height="23" rx="1.5" fill="#41a5ee"/><path d="M6 7.5h18v8H6z" fill="#2b7cd3"/><path d="M6 15.5h18V22c0 .5-.5 1-1 1H7c-.5 0-1-.5-1-1z" fill="#185abd"/><rect x="0" y="5" width="12" height="13" rx="1" fill="#185abd"/><path d="M2 8l1.5 7 2.5-5.5 2.5 5.5L10 8" fill="none" stroke="#fff" stroke-width="1.4"/></svg>
 <div class="abs dot" style="left:780px"></div>
 <svg class="abs" style="left:815px;top:12px" width="24" height="24" viewBox="0 0 24 24"><use href="#chromei"/></svg>
 <svg class="abs" style="left:859px;top:12px" width="24" height="24" viewBox="0 0 24 24"><circle cx="12" cy="12" r="12" fill="#fff"/><path d="M12 4.5a7.5 7.5 0 0 0-6.4 11.4L4.5 19.5l3.7-1a7.5 7.5 0 1 0 3.8-14z" fill="none" stroke="#25d366" stroke-width="1.6"/><path d="M9 8.5c.5-.5 1-.4 1.2.1l.6 1.4c.1.3 0 .6-.3.9-.3.3-.2.6 0 .9.6.9 1.3 1.6 2.2 2.1.3.2.6.2.8-.1.3-.3.6-.4.9-.2l1.3.7c.4.2.5.7.1 1.1-.9 1-2.3 1.1-3.9.1-1.5-1-2.6-2.2-3.4-3.6-.7-1.3-.4-2.7.5-3.4z" fill="#25d366"/></svg>
 <svg class="abs" style="left:872px;top:7px" width="16" height="16" viewBox="0 0 20 20"><g clip-path="url(#avc2)"><rect width="20" height="20" fill="#d4d5dd"/><path d="M3 2l6 7-3 9h8l-3-9 6-7-7 5z" fill="#2a2b33"/><path d="M4 3l3.5 4 2.5-1M16 3l-3.5 4-2.5-1" fill="#2d6fc8"/><circle cx="10" cy="13" r="3.5" fill="#55565e"/><path d="M1 15l5-3M19 15l-5-3" stroke="#777" stroke-width="1.6"/></g></svg>
 <div class="abs dot" style="left:868px"></div>
 <svg class="abs" style="left:903px;top:12px" width="24" height="24" viewBox="0 0 24 24"><circle cx="12" cy="12" r="12" fill="#1ed760"/><path d="M6 8.5c4-1.2 8.5-.8 12 1.2M6.6 12c3.4-1 7-.7 10 1M7.2 15.3c2.8-.8 5.6-.5 8 .8" fill="none" stroke="#111" stroke-width="1.8" stroke-linecap="round"/></svg>
 <div class="abs dot" style="left:912px"></div>
 <div class="abs" style="left:939px;top:4px;width:40px;height:39px;border-radius:4px;background:#2b2b2b;border:1px solid #333"></div>
 <svg class="abs" style="left:947px;top:12px" width="24" height="24" viewBox="0 0 24 24"><use href="#chromei"/></svg>
 <svg class="abs" style="left:961px;top:7px" width="16" height="16" viewBox="0 0 20 20"><g clip-path="url(#avc2)"><rect width="20" height="20" fill="#d4d5dd"/><path d="M3 2l6 7-3 9h8l-3-9 6-7-7 5z" fill="#2a2b33"/><path d="M4 3l3.5 4 2.5-1M16 3l-3.5 4-2.5-1" fill="#2d6fc8"/><circle cx="10" cy="13" r="3.5" fill="#55565e"/><path d="M1 15l5-3M19 15l-5-3" stroke="#777" stroke-width="1.6"/></g></svg>
 <div class="abs" style="left:949px;top:40px;width:18px;height:3px;border-radius:2px;background:#4cc2ff"></div>
 <svg class="abs" style="left:992px;top:13px" width="22" height="22" viewBox="0 0 22 22"><rect width="22" height="22" rx="3" fill="#b30b00"/><path d="M4.5 16.5c1.5-2.5 4-7 5-10 .5-1.5 0-3-.6-3s-1 1.2-.7 3c.6 3.5 3.5 7 8 8 1.2.3 1.6-.8.5-1-2.5-.5-6.5.2-10.5 2-1.4.7-2 1.3-1.7 1z" fill="none" stroke="#fff" stroke-width="1.3"/></svg>
 <div class="abs dot" style="left:1000px"></div>
 <svg class="abs" style="left:1037px;top:11px" width="20" height="26" viewBox="0 0 20 26"><defs><linearGradient id="pt" x1="0" y1="0" x2="0" y2="1"><stop offset="0" stop-color="#f6c93a"/><stop offset=".35" stop-color="#e0569b"/><stop offset=".65" stop-color="#8b5ad8"/><stop offset="1" stop-color="#1ea7f0"/></linearGradient></defs><path d="M10 0C7 5 1 10 1 16a9 9 0 0 0 18 0C19 10 13 5 10 0z" fill="url(#pt)"/></svg>
 <div class="abs dot" style="left:1044px"></div>
 <!-- tray -->
 <svg class="abs" style="left:1136px;top:20px" width="13" height="8" viewBox="0 0 13 8"><path d="M1 7l5.5-5.5L12 7" fill="none" stroke="#e8e8e8" stroke-width="1.5"/></svg>
 <div class="abs" style="left:1164px;top:9px;width:34px;font-size:12px;line-height:16px;color:#f0f0f0;text-align:center;letter-spacing:-0.4px">ESP<br>LAA</div>
 <svg class="abs" style="left:1210px;top:16px" width="18" height="17" viewBox="0 0 18 17"><path d="M12 2H1.5v10h14V8" fill="none" stroke="#e8e8e8" stroke-width="1.3"/><path d="M8 12v3M4.5 15.5h8" stroke="#e8e8e8" stroke-width="1.3"/><rect x="12.5" y=".5" width="4" height="6" rx="1" fill="none" stroke="#e8e8e8" stroke-width="1.1"/><path d="M14.5 6.5V12" stroke="#e8e8e8" stroke-width="1.1"/></svg>
 <svg class="abs" style="left:1234px;top:16px" width="18" height="16" viewBox="0 0 18 16"><path d="M1 5.5h3L8.5 1.5v13L4 10.5H1z" fill="none" stroke="#e8e8e8" stroke-width="1.2" stroke-linejoin="round"/><path d="M11 5.5c1 1.3 1 3.7 0 5M13.5 3.5c2 2.5 2 6.5 0 9" fill="none" stroke="#9a9a9a" stroke-width="1.1"/></svg>
 <div class="abs" style="left:1262px;top:8px;width:61px;font-size:12px;line-height:16px;color:#f0f0f0;text-align:right"><span style="letter-spacing:-0.25px">15:37:56</span><br><span style="letter-spacing:-0.1px">26/3/2025</span></div>
 <svg class="abs" style="left:1331px;top:16px" width="15" height="16" viewBox="0 0 15 16"><path d="M7.5 1a4.5 4.5 0 0 0-4.5 4.5V9L1 12h13l-2-3V5.5A4.5 4.5 0 0 0 7.5 1z" fill="#6ed6f5"/><path d="M5.5 13.5a2 2 0 0 0 4 0z" fill="#6ed6f5"/></svg>
</div>
<svg width="0" height="0" style="position:absolute"><defs>
 <clipPath id="avc2"><circle cx="10" cy="10" r="10"/></clipPath><g id="chromei"><circle cx="12" cy="12" r="11.5" fill="#db4437"/><path d="M12 12 2 17.8A11.5 11.5 0 0 0 14 23.4z" fill="#0f9d58"/><path d="M12 12l10-5.7A11.5 11.5 0 0 1 14 23.4z" fill="#ffcd40"/><path d="M2.1 6.3A11.5 11.5 0 0 1 22 6.3H12L7.1 14.9z" fill="#db4437"/><path d="M2 17.8A11.5 11.5 0 0 1 2.1 6.3L7.1 14.9 12 12z" fill="#0f9d58"/><circle cx="12" cy="12" r="5.2" fill="#fff"/><circle cx="12" cy="12" r="4.2" fill="#1a73e8"/></g>
</defs></svg>

</body></html>
